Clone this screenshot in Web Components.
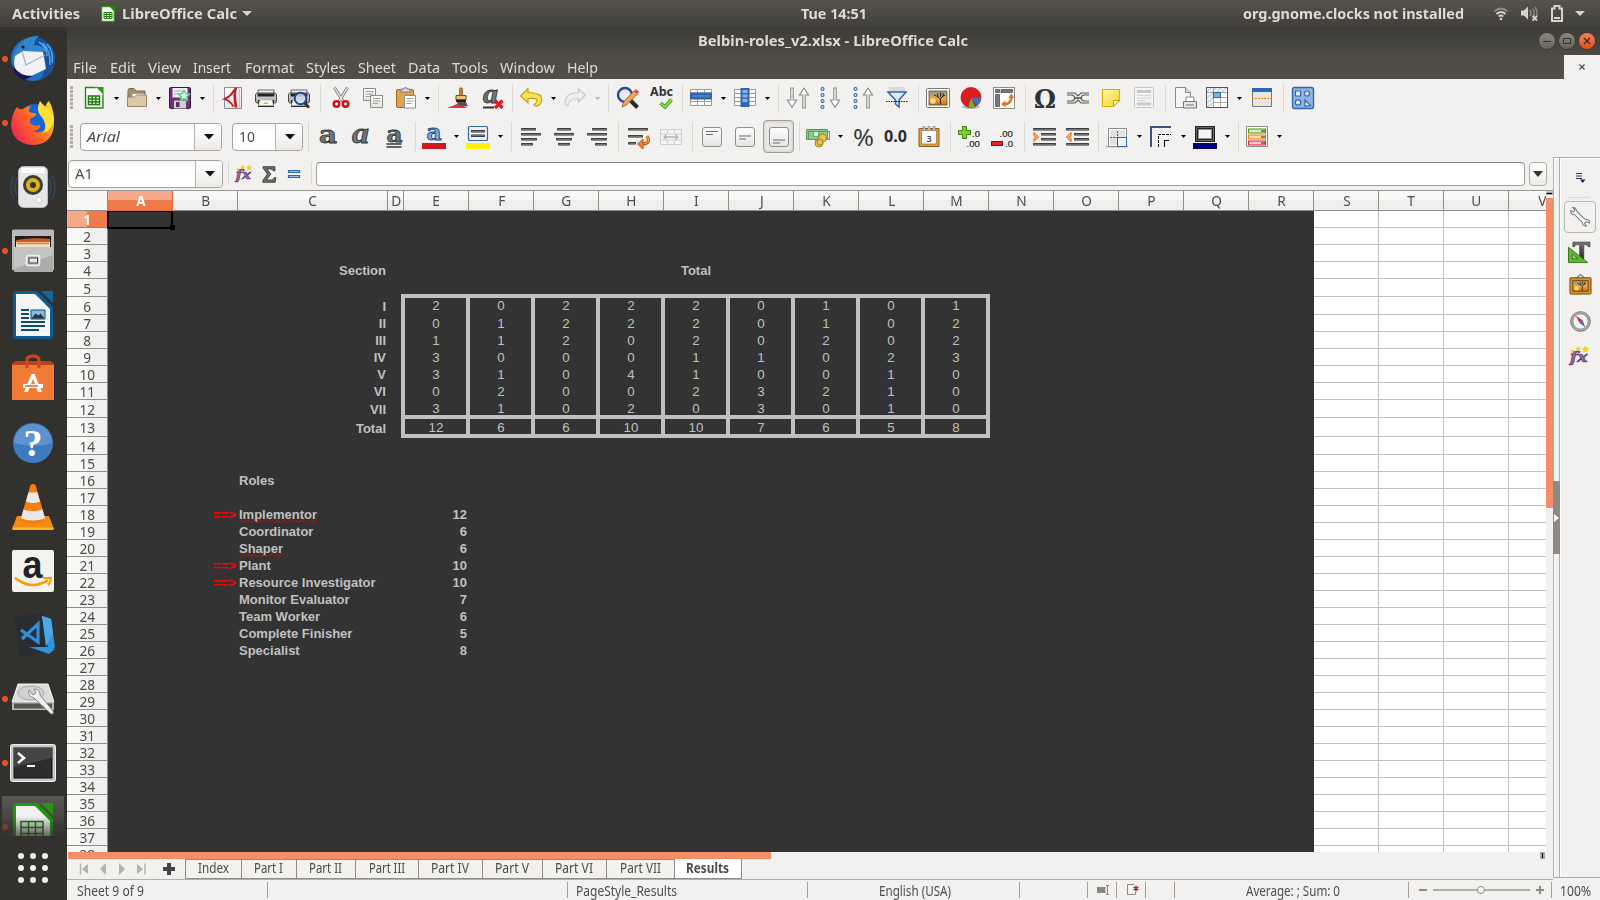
<!DOCTYPE html>
<html lang="en">
<head>
<meta charset="utf-8">
<title>Belbin-roles_v2.xlsx - LibreOffice Calc</title>
<style>
html,body{margin:0;height:100%;overflow:hidden}
body{font-family:"Noto Sans","Open Sans",sans-serif;font-size:14.4px;color:#4c4c4c;background:#f2f1f0}
</style>
</head>
<body>
<calc-desktop></calc-desktop>
<script>
/* ---------- icon artwork, 24x24 units unless noted ---------- */
const DEFS = `<defs>
<linearGradient id="pg" x1="0" y1="0" x2="0" y2="1"><stop offset="0" stop-color="#fff"/><stop offset="1" stop-color="#e4e4e2"/></linearGradient>
<linearGradient id="gr" x1="0" y1="0" x2="0" y2="1"><stop offset="0" stop-color="#e8e8e8"/><stop offset="1" stop-color="#9a9a9a"/></linearGradient>
<linearGradient id="dk" x1="0" y1="0" x2="0" y2="1"><stop offset="0" stop-color="#777"/><stop offset="1" stop-color="#222"/></linearGradient>
<linearGradient id="ye" x1="0" y1="0" x2="1" y2="1"><stop offset="0" stop-color="#fff7a0"/><stop offset="1" stop-color="#f3d62f"/></linearGradient>
<linearGradient id="sun" x1="0" y1="0" x2="0" y2="1"><stop offset="0" stop-color="#8f9a90"/><stop offset=".55" stop-color="#f0a540"/><stop offset="1" stop-color="#c06a18"/></linearGradient>
</defs>`;
const printer = `<path d="M4 4h16v4H4z" fill="#f4f4f4" stroke="#666"/><rect x="1.5" y="7" width="21" height="10" rx="2" fill="url(#gr)" stroke="#444"/><rect x="3.5" y="7.5" width="17" height="3" fill="#222"/><path d="M4 14h16v7H4z" fill="#2b2b2b"/><path d="M6 14h12l1.5 5.5h-15z" fill="#f6faf0" stroke="#bbb" stroke-width=".6"/><path d="M9 18l3-2 3 2z" fill="#8fce50"/>`;
const lines = a => a.map(([x,y,w])=>`<rect x="${x}" y="${y}" width="${w}" height="2.6" rx=".8" fill="#2a2c2c"/><rect x="${x+.8}" y="${y+.8}" width="${w-1.6}" height=".9" fill="#8b8f8d"/>`).join('');
const down = (x) => `<path d="M${x-1.2} 2h2.4v12h3.4L${x} 21.5 ${x-4.6} 14h3.4z" fill="#fff" stroke="#888a85" stroke-width="1.1"/>`;
const up = (x) => `<path d="M${x-1.2} 22h2.4V9h3.4L${x} 2.2 ${x-4.6} 9h3.4z" fill="#fff" stroke="#888a85" stroke-width="1.1"/>`;
const rings = `<g fill="#dce8f6" stroke="#3465a4" stroke-width="1.1"><circle cx="2.5" cy="3" r="1.5"/><circle cx="2.5" cy="9" r="1.5"/><circle cx="2.5" cy="15" r="1.5"/><circle cx="2.5" cy="21" r="1.5"/></g>`;
const vbox = (y) => `<rect x="2.5" y="2.5" width="19" height="19" rx="2.5" fill="url(#pg)" stroke="#8d8d8a"/><path d="M6 ${y}h12M6 ${y+3}h7" stroke="#6a6a68" stroke-width="1.2"/>`;
const glyphA = (x,y,s,extra='',f='DejaVu Serif') => `<text x="${x}" y="${y}" font-family="${f}" font-weight="700" font-size="${s}" fill="#70757a" stroke="#303433" stroke-width=".8" ${extra}>a</text>`;
const fx = `<text x="1" y="18.5" font-family="DejaVu Serif" font-weight="700" font-style="italic" font-size="17" textLength="19" lengthAdjust="spacingAndGlyphs" fill="#9c6a9b" stroke="#5c3566" stroke-width=".8">fx</text><g fill="#f3d52c" stroke="#d8b400" stroke-width=".3"><path d="M18 1l1.1 2.4 2.6.3-1.9 1.8.5 2.6L18 6.9l-2.3 1.2.5-2.6-1.9-1.8 2.6-.3z"/><path d="M10 1.5l.8 1.7 1.8.2-1.3 1.3.3 1.8L10 5.6l-1.6.9.3-1.8-1.3-1.3 1.8-.2zM3.5 5l.6 1.2 1.3.2-1 .9.3 1.3-1.2-.6-1.2.6.3-1.3-1-.9 1.3-.2z"/></g>`;
const tree = `<path d="M14.500 18.500v-5.500l-4-3M14.500 13l3.500-4M14.500 11V6.500M12 10.800l-.5-3.500M16 10.500l3-1.500M10.500 10L8 9M17 9.500V7" stroke="#2a2016" stroke-width=".95" fill="none"/>`;
const ICONS = {
new:`<path d="M3.5 1.5h11.500l6 6v14.500H3.500z" fill="url(#pg)" stroke="#2c8a12" stroke-width="1.400"/><path d="M14 1h7.500v7z" fill="#2f9a12"/><path d="M14 1.500l7 7" stroke="#fff" stroke-width="1"/><g fill="#fff" stroke="#217c0b" stroke-width="1.400"><path d="M6.500 10h11v8.500h-11zM6.500 13h11M6.500 15.700h11M10.200 10v8.500M13.800 10v8.500"/></g>`,
open:`<path d="M3 4.500q0-2 2-2h4l2 2.500h9v6H3z" fill="#a68f68" stroke="#7c684a"/><path d="M7 7.500h12v6H7z" fill="#fff" stroke="#999" stroke-width=".8"/><path d="M2.500 11h7l2-2h10v11.500h-19z" fill="#d9c7a5" stroke="#9c8660"/>`,
save:`<rect x="1.500" y="1.500" width="21" height="21" rx="1.500" fill="#6d3177" stroke="#3e1448"/><path d="M4.500 2h15v9.500h-15z" fill="#efeef2"/><path d="M6 5h9M6 8h8" stroke="#aaa"/><path d="M6 14.500h12v8H6z" fill="#cfd0cf"/><path d="M8 16h3.500v5H8z" fill="#573060"/><path d="M16 4.500l1.700 3.200 3.700.5-2.600 2.500.6 3.600-3.400-1.600-3.300 1.600.6-3.600L10.600 8l3.700-.4z" fill="#fff" stroke="#4ddc80" stroke-width="1.500"/>`,
pdf:`<path d="M3.500 1.500h17v21h-17z" fill="url(#pg)" stroke="#8c8c8c"/><path d="M15 1.500q-2.500 5 0 20" fill="none" stroke="#c8161d" stroke-width="2.600"/><path d="M13 4Q10 10.500 3.500 13q5.500 1.500 9 7.500" fill="none" stroke="#c8161d" stroke-width="1.800"/><path d="M18.500 2v20" stroke="#e3b9b9" stroke-width="1.200"/>`,
print:printer,
preview:printer+`<circle cx="13.500" cy="12.500" r="5.800" fill="#cfdcec" fill-opacity=".85" stroke="#24459a" stroke-width="2"/><path d="M17.500 17l4.500 4.500" stroke="#333" stroke-width="3"/>`,
cut:`<path d="M5.500 1.500l8.500 14M18.500 1.500L10 15.500" stroke="#777" stroke-width="3"/><path d="M5.500 1.500l8.500 14M18.500 1.500L10 15.500" stroke="#eee" stroke-width="1.400"/><g fill="#fff" stroke="#cc1420" stroke-width="2.600"><circle cx="7.500" cy="18" r="2.700"/><circle cx="16.500" cy="18" r="2.700"/></g>`,
copy:`<path d="M2.500 2.500h12v12h-12z" fill="url(#pg)" stroke="#8a8c88"/><path d="M4.500 5.500h8M4.500 8h8M4.500 10.500h6" stroke="#9a9c98"/><path d="M9.500 9.500h12v12h-12z" fill="url(#pg)" stroke="#8a8c88"/><path d="M12 12.500h7.500M12 15h7.500M12 17.500h5" stroke="#9a9c98"/>`,
paste:`<rect x="2.500" y="3.500" width="17" height="18" rx="1.500" fill="#dfa254" stroke="#a06a1c"/><path d="M7 6V3h3q0-1.500 1.500-1.500T13 3h3v3z" fill="#ddd" stroke="#777"/><path d="M10.500 9.500h11v12.500h-11z" fill="#fff" stroke="#8a8c88"/><path d="M12.500 12.500h7M12.500 15h7M12.500 17.500h5" stroke="#9a9c98"/>`,
brush:`<path d="M1 22q7-2.500 12-5l8 5z" fill="#e2343f"/><path d="M11 16l8.500-1 2.500 5.500-9.500-1z" fill="#555"/><path d="M10 9.500h10v4.500H10z" fill="#f0c36d" stroke="#6a4a1a"/><path d="M13.700 9.500V2.500q1.200-1.500 2.600 0v7z" fill="#c98a3b" stroke="#8a5a1c"/><path d="M10 13.500h10v2.500H10z" fill="#222"/>`,
clear:glyphA(2,17,27,'font-style="italic" textLength="15" lengthAdjust="spacingAndGlyphs"','Liberation Serif')+`<path d="M2 21.500h11" stroke="#333" stroke-width="2"/><path d="M14 14.500l7.500 7.500M21.500 14.500L14 22" stroke="#e01b24" stroke-width="3.200"/>`,
undo:`<path d="M1.500 10L9 2.500v4q9 0 13 3.500 2.500 7-3.500 10-3 .5-3.500-1.500 4-2.500 2.500-5.500Q14.500 12 9 12.500V17z" fill="#f6e15a" stroke="#c4a000" stroke-width="1.100"/>`,
redo:`<path d="M22.500 9L15.500 3v3.500Q4.500 7 2.500 13q-1 3 .5 6l2 .5q.5-6.500 10.500-7v3.500z" fill="#ececeb" stroke="#c8c8c6" stroke-width="1.100"/>`,
find:`<path d="M14 14l7.500 7.500" stroke="#2a2a2a" stroke-width="4"/><circle cx="9" cy="9" r="7" fill="#e4ecf6" stroke="#26479b" stroke-width="2.400"/><path d="M6 21l1.500-5L18 5l3.500 3L10.500 19z" fill="#f3a45c" stroke="#a14c0c" stroke-width=".8"/><path d="M18 5l3.500 3 1.500-2-3-3z" fill="#ee4050"/>`,
abc:`<text x="0" y="10" font-family="Noto Sans" font-weight="700" font-size="13" textLength="23" lengthAdjust="spacingAndGlyphs" fill="#333">Abc</text><path d="M10.500 17l4.500 4 6.500-7.500" fill="none" stroke="#3c9d0c" stroke-width="3.600"/><path d="M10.500 17l4.500 4 6.500-7.500" fill="none" stroke="#9be35e" stroke-width="1.600"/>`,
row:`<path d="M1.500 3.500h21v16h-21zM1.500 7h21M1.500 15.500h21M8.500 3.500v16M15.500 3.500v16" fill="#fff" stroke="#999b97"/><rect x="1" y="6.500" width="22" height="7" fill="#2f66b0"/><path d="M3 10h18" stroke="#6b98d0"/>`,
col:`<path d="M1.500 3.500h21v16h-21zM1.500 7.500h21M1.500 11.500h21M1.500 15.500h21" fill="#fff" stroke="#999b97"/><rect x="7.500" y="2" width="9" height="19" fill="#2f66b0"/><path d="M9.500 4h5v3h-5zM9.500 8.500h5v3h-5zM9.500 13h5v3h-5z" fill="#8db3e0"/>`,
sort:down(6)+up(18),
asc:rings+down(15),
desc:rings+up(15),
filter:`<path d="M4 1h16v5H4z" fill="#ccc" opacity=".6"/><path d="M3 6h18l-7 8v7l-3.500-3v-4z" fill="#dfeaf8" stroke="#3465a4" stroke-width="1.500"/><path d="M1 15.500h22" stroke="#222" stroke-dasharray="1.500 1"/>`,
image:`<rect x=".5" y="2.500" width="23" height="19" rx="1" fill="#fbfbfa" stroke="#777"/><rect x="3" y="5" width="18" height="14" fill="url(#sun)" stroke="#444" stroke-width=".7"/><circle cx="7" cy="15" r="2.800" fill="#ffe37a"/>${tree}`,
chart:`<ellipse cx="12" cy="21" rx="9" ry="2" fill="#bbb"/><circle cx="12" cy="11.500" r="10" fill="#e01b20" stroke="#a40000" stroke-width=".7"/><path d="M12 12l10-1q0 6-4 9z" fill="#3f6fb5"/><path d="M12 12l4 9.300q-4 .8-6.500-.3z" fill="#6cb52d"/>`,
pivot:`<path d="M1.500 1.500h21v21h-21z" fill="#fff" stroke="#8a8c88"/><path d="M3.500 3.500h4v3h-4zM9 3.500h11.500v3H9zM3.500 8.500h4v12h-4z" fill="#777" stroke="#444" stroke-width=".7"/><path d="M11.500 18q7 1 8-7" fill="none" stroke="#e8731a" stroke-width="2.500"/><path d="M9 18l4.500-3.500v7zM19.300 7.500l3 4.500h-6z" fill="#e8731a"/>`,
omega:`<text x="1" y="21.500" font-family="DejaVu Serif" font-weight="700" font-size="26" textLength="22" lengthAdjust="spacingAndGlyphs" fill="#2e3436">Ω</text>`,
link:`<g fill="none" stroke="#555753" stroke-width="1.100"><path d="M1 9h5q2 0 3 3-1 3-3 3H1M23 9h-5q-2 0-3 3 1 3 3 3h5"/><path d="M1 7h8l3 3 3-3h8M1 17h8l3-3 3 3h8"/><path d="M8 12h8" stroke-width="1.600"/></g>`,
note:`<path d="M3.500 3.500h17v11l-6 6h-11z" fill="url(#ye)" stroke="#d3b400" stroke-width="1.200"/><path d="M14.500 20.500v-6h6z" fill="#fff6b0" stroke="#c4a000"/>`,
hf:`<rect x="2.500" y="1.500" width="19" height="20" rx="1" fill="#f3f3f2" stroke="#c6c6c4"/><path d="M5 4h14v3H5zM5 16.500h14v3H5z" fill="#c9c9c7"/><path d="M5 9.500h14M5 12h14M5 14.500h8" stroke="#d6d6d4"/>`,
parea:`<path d="M2.500 1.500h10l5 5v15h-15z" fill="#f6f6f5" stroke="#8a8a88"/><path d="M12.500 1.500v5h5" fill="#ddd" stroke="#8a8a88"/><path d="M13 11h8v5h-8z" fill="#fff" stroke="#888"/><path d="M10.500 15.500h13v6.500h-13z" fill="#e6e6e4" stroke="#777"/><path d="M13 19h8" stroke="#999" stroke-width="1.500"/>`,
freeze:`<path d="M1.500 1.500h21v20h-21z" fill="#fff" stroke="#555"/><path d="M2 2h20v4.500H2zM2 6.500h6V21H2z" fill="#eef2f6"/><path d="M2 6l4-4M7 6l4-4M12 6l4-4M17 6l4-4M2 12l6-5M2 17l6-5M2 21l6-4" stroke="#9bb5cf" stroke-width=".8"/><path d="M8.500 2v19M2 6.500h20M15.500 6v15M8 11.500h14M8 16.500h14" stroke="#aaa"/><rect x="8.500" y="6.500" width="7" height="5" fill="#86aedb" stroke="#3465a4"/><path d="M1.500 1.500h21v20h-21z" fill="none" stroke="#555"/>`,
split:`<path d="M2.500 2.500h19v18h-19z" fill="#e6e7e4" stroke="#777"/><rect x="2" y="2" width="20" height="4" fill="#2f66b0"/><path d="M2 12.500h20" stroke="#f57900" stroke-dasharray="2 1" stroke-width="1.200"/>`,
draw:`<rect x="1.500" y="1.500" width="21" height="21" rx="2" fill="#8fb4df" stroke="#2f66b0" stroke-width="1.400"/><g fill="#e9f1fa" stroke="#2f66b0" stroke-width="1.200"><path d="M4.500 5h5v5h-5zM14 20v-6l5.500 5.500z"/><circle cx="16" cy="7.500" r="2.500"/><circle cx="7" cy="16.500" r="2.700"/></g>`,
ba:glyphA(3,18,24,'textLength="18" lengthAdjust="spacingAndGlyphs"'),
ia:glyphA(3,18,29,'font-style="italic" textLength="17" lengthAdjust="spacingAndGlyphs"','Liberation Serif'),
ua:glyphA(4.500,16.500,22,'textLength="16" lengthAdjust="spacingAndGlyphs"')+`<path d="M4.500 19h15M4.500 22h15" stroke="#333" stroke-width="1.400"/>`,
fcol:`<text x="4.500" y="15" font-family="DejaVu Serif" font-weight="700" font-size="22" textLength="15" lengthAdjust="spacingAndGlyphs" fill="#7fa8dc" stroke="#204a87" stroke-width=".9">a</text><rect y="18" width="24" height="6" fill="#cf1820"/>`,
hcol:`<rect x="2.500" y="1.500" width="19" height="14" rx="1" fill="#eef3fa" stroke="#3465a4" stroke-width="1.200"/>${lines([[5,5,14],[5,9.500,14]])}<rect y="18" width="24" height="6" fill="#fff200"/>`,
al:lines([[2,3,15],[2,8,20],[2,13,16],[2,18,12]]),
ac:lines([[5,3,14],[2,8,20],[4,13,16],[6,18,12]]),
ar:lines([[7,3,15],[2,8,20],[6,13,16],[10,18,12]]),
wrap:lines([[2,3,20],[2,10,15],[2,17,8]])+`<path d="M21 11q5 8-6 8" fill="none" stroke="#c65306" stroke-width="3"/><path d="M21 11q5 8-6 8" fill="none" stroke="#f9a35a" stroke-width="1.200"/><path d="M11.500 19l5.500-5v10z" fill="#f28030" stroke="#c65306"/>`,
merge:`<path d="M1.500 4.500h21v15h-21zM1.500 9h21M1.500 15h21M8.500 4.500V9M15.500 4.500V9M8.500 15v4.500M15.500 15v4.500" fill="#f3f3f2" stroke="#cfcfcd"/><path d="M5 12h14M7.500 9.500L5 12l2.500 2.500M16.500 9.500L19 12l-2.500 2.500" fill="none" stroke="#b4b4b2" stroke-width="1.300"/>`,
vt:vbox(6.500), vm:vbox(11), vb:vbox(15),
cur:`<path d="M.5 4.500h21v10H.5z" fill="#8cc98a" stroke="#5a9a58"/><path d="M2.500 6.500h21v8h-21z" fill="none" stroke="#5a9a58"/><circle cx="10" cy="9" r="3" fill="#e2f2e0" stroke="#5a9a58"/><g fill="#e6c652" stroke="#a5861a"><circle cx="13" cy="18" r="4"/><circle cx="16.500" cy="13" r="4"/><circle cx="14" cy="17" r="3"/></g>`,
pct:`<text x="1" y="20.500" font-family="Noto Sans" font-size="23" textLength="21" lengthAdjust="spacingAndGlyphs" fill="#3a3a3a">%</text>`,
dec:`<text x="0" y="17" font-family="Noto Sans" font-weight="700" font-size="15.500" textLength="23" lengthAdjust="spacingAndGlyphs" fill="#2c2c2c">0.0</text>`,
date:`<path d="M2 3.500h20v18H2z" fill="#dea24e" stroke="#8d5d17"/><path d="M4.500 5.500h15v13.500h-15z" fill="#fafafa" stroke="#8d5d17" stroke-width=".6"/><path d="M7 1v5M12 1v5M17 1v5" stroke="#777" stroke-width="2.600"/><path d="M7 1.500v4M12 1.500v4M17 1.500v4" stroke="#fff" stroke-width="1"/><text x="9.500" y="16.500" font-family="Noto Sans" font-weight="600" font-size="9" fill="#444">3</text>`,
dadd:`<path d="M5.500 1.500h4v4h4v4h-4v4h-4v-4h-4v-4h4z" fill="#7bd41c" stroke="#3c8208"/><text x="15" y="11.500" font-family="Liberation Sans" font-size="9.500" fill="#222" stroke="#222" stroke-width=".2">.0</text><text x="9.500" y="22" font-family="Liberation Sans" font-size="9.500" fill="#222" stroke="#222" stroke-width=".2">.00</text>`,
ddel:`<text x="9.500" y="11.500" font-family="Liberation Sans" font-size="9.500" fill="#222" stroke="#222" stroke-width=".2">.00</text><text x="15" y="22" font-family="Liberation Sans" font-size="9.500" fill="#222" stroke="#222" stroke-width=".2">.0</text><rect x="1.500" y="16.500" width="11" height="4" fill="#e5212b" stroke="#8f0b10"/>`,
ind:lines([[1,3,23],[9,8,15],[9,13,15],[1,18,23]])+`<path d="M2 7.500l4.500 4.500L2 16.500v-3L3.500 12 2 10.500z" fill="#fbb36b" stroke="#e0640c"/>`,
outd:lines([[1,3,23],[9,8,15],[9,13,15],[1,18,23]])+`<path d="M6 7.500L1.500 12 6 16.500v-3L4.500 12 6 10.500z" fill="#fbb36b" stroke="#e0640c"/>`,
bord:`<path d="M1 21.500h22" stroke="#bbb" stroke-width="2"/><path d="M3.500 3.500h18v18h-18z" fill="#fff" stroke="#8a8c88"/><path d="M5 5h15v15H5z" fill="#e2e3e0"/><path d="M12.500 6v7M5 12.500h8" stroke="#555" stroke-dasharray="2 1"/><rect x="12.500" y="12.500" width="9" height="9" fill="#edf3fa" stroke="#3465a4"/>`,
bsty:`<path d="M2 22V2h20" fill="none" stroke="#3a5378" stroke-width="2"/><path d="M9.500 22V9.500H22" fill="none" stroke="#111" stroke-width="1" stroke-dasharray="3 1"/><path d="M15.500 22v-6.500H20" fill="none" stroke="#111" stroke-width="1.100"/>`,
bcol:`<rect x="2" y="1" width="20" height="16" fill="#222"/><path d="M3.500 2.500h17v13h-17z" fill="none" stroke="#666"/><path d="M5.500 4.500h13v9h-13z" fill="#f4f4f4" stroke="#999" stroke-width=".8"/><rect y="18" width="24" height="6" fill="#00007f"/>`,
cond:`<path d="M1.500 1.500h21v20h-21z" fill="#fff" stroke="#8a8c88"/><g stroke-width="1.200"><path d="M3.500 4h17v4h-17z" fill="#d5f0b8" stroke="#4e9a06"/><path d="M3.500 10h17v4h-17z" fill="#fddcb0" stroke="#e88010"/><path d="M3.500 16h17v4h-17z" fill="#fbc2c6" stroke="#e02030"/></g><path d="M16 6h4M16 12h4M16 18h4" stroke="#222"/>`,
fx, sum:`<path d="M5.500 4h13v4.500h-2q-.3-2-2.500-2H9.700l4.300 5.700-5 6.300h6q2 0 2.500-2.500h2l-.8 5H5.300v-2l5-7-4.800-6.500z" fill="#6a6f6c" stroke="#303433" stroke-width=".9"/>`,
eq:`<path d="M6.500 8.500h11v2h-11zM6.500 13.500h11v2h-11z" fill="#9bbde5" stroke="#2f66b0" stroke-width="1.200"/>`,
smenu:`<path d="M8 8.500h6M8 11h6M8 13.500h6" stroke="#2b3a52" stroke-width="1.200"/><path d="M12 14.500h5.500L14.700 18z" fill="#1a2a44"/>`,
wrench:`<path d="M8 4q-1-2.500-4-2.500l2.500 3L5 6.500 2 5q-.5 4 4 4.500L14.500 18q.5 4 4.500 4l-2-3 2-2 3.500 1.500q0-4.500-5-4L9 6.500Q8.700 5 8 4z" fill="#f6f6f5" stroke="#777" stroke-width="1.100"/>`,
tt:`<path d="M5 1h18v5h-2q-.5-2-2.500-2h-2v15h-4.500V4H9Q7 4 7 6H5z" fill="url(#dk)" stroke="#333" stroke-width=".5"/><path d="M.5 6.500v16h20z" fill="#63b43a" stroke="#2f7d10"/><path d="M4.500 13.500v5h6z" fill="#a4dd80" stroke="#2f7d10"/>`,
gal:`<path d="M8 5l4-3.500L16 5" fill="none" stroke="#777" stroke-width="1.200"/><rect x="1" y="5" width="22" height="17" rx="1" fill="#d9952c" stroke="#6d430a"/><rect x="4" y="8" width="16" height="11" fill="url(#sun)" stroke="#5b3708" stroke-width=".8"/><circle cx="8" cy="16" r="2.300" fill="#ffe37a"/><g transform="translate(2 3.500) scale(.82)">${tree}</g>`,
nav:`<circle cx="12" cy="12" r="10.300" fill="#aaadab" stroke="#777"/><circle cx="12" cy="12" r="8" fill="#f5f5f4" stroke="#888"/><path d="M7 6l7 4.500-3 3z" fill="#e3282f"/><path d="M17 18l-3-7.500-3 3z" fill="#3f6fb5"/>`
};
const svg = (n,s=24) => `<svg width="${s}" height="${s}" viewBox="0 0 24 24">${DEFS}${ICONS[n]}</svg>`;

/* ---------- launcher artwork, 48x48 units ---------- */
const DOCK = {
thunderbird:`<circle cx="24" cy="24" r="22" fill="#1f6fc4"/><path d="M12 8Q20-1 33 4q12 6 13 18 0 16-16 24 8-10 6-24L24 12z" fill="#1a4f9c"/><path d="M6 17Q14 0 30 1q-4 3-5 9 9 0 12 6L4 26q-1-5 2-9z" fill="#2f86cc"/><path d="M34 8q8 8 7 22M38 9q7 8 5 19M30 7q8 5 8 14" stroke="#4ea6e8" stroke-width="1.500" fill="none"/><path d="M6 21l8-5 20 1 3 17-19 9Q5 38 5 27z" fill="#f1f2f5"/><path d="M13 16l4 14 19-10" stroke="#a9adb6" fill="none" stroke-width="1.200"/><path d="M4 31q6 10 20 10l-9 4Q5 42 4 31z" fill="#1c1250"/><circle cx="14" cy="12" r="1.600" fill="#111"/>`,
firefox:`<defs><linearGradient id="f1" x1="0" y1=".8" x2="1" y2=".2"><stop offset="0" stop-color="#f0205a"/><stop offset=".5" stop-color="#ff6a20"/><stop offset="1" stop-color="#ffd92a"/></linearGradient></defs><circle cx="26" cy="22" r="17" fill="#1266d8"/><path d="M8 8q2 3 6 2 4-3 8-3-3 4-2 6 4 1 8 2-4 4-6 4-2 3 0 6 5 3 9 1 0 6-8 6 12 4 16-6 3-8-3-15 0-6 4-9 6 10 5 24-2 20-22 20Q3 44 2 26 3 14 8 8z" fill="url(#f1)"/><path d="M31 2q-4 8 0 14 8 8 4 18 8-3 10-14Q44 12 37 8q-4-3-6-6z" fill="#ffe13a"/>`,
speaker:`<path d="M5 12q-6 12 0 24M43 12q6 12 0 24M8 15q-4 9 0 18M40 15q4 9 0 18" stroke="#2f4256" stroke-width="2" fill="none"/><rect x="9.500" y="3.500" width="29" height="41" rx="5" fill="#e6e6e6" stroke="#bbb"/><rect x="12" y="5" width="24" height="5" rx="2" fill="#fff"/><circle cx="24" cy="22" r="10" fill="#3d3d3d"/><circle cx="24" cy="22" r="7" fill="#d9b514"/><circle cx="24" cy="22" r="3" fill="#333"/><circle cx="30" cy="37" r="3" fill="#fafafa" stroke="#ccc"/>`,
files:`<path d="M3 4q0-1.500 1.500-1.500h39Q45 2.500 45 4v39H3z" fill="#b9b9b9"/><path d="M6 9h36v14H6z" fill="#231c1a"/><path d="M7 13q17-3 34-1v9H7z" fill="#cf5a22"/><path d="M7 15h34v5H7z" fill="#f5e0c4"/><path d="M8 16.500h32" stroke="#e07a30" stroke-width="1.500"/><path d="M5 20h39v25H5z" fill="#ababab"/><path d="M5 20h39v8L5 42z" fill="#c3c3c3"/><rect x="17.500" y="28.500" width="13" height="10" rx="1.500" fill="#bdbdbd" stroke="#efefef" stroke-width="1.500"/><rect x="20" y="31" width="8.500" height="5" fill="#e2e2e2" stroke="#444"/>`,
writer:`<path d="M4 4q0-4 4-4h20l16 16v28q0 4-4 4H8q-4 0-4-4z" fill="#0e5c92"/><path d="M7 3h19l15 15v27H7z" fill="#f4f5f6"/><path d="M32 0h12v12z" fill="#0d69a6"/><path d="M12 19h8M12 23h8M12 27h8M12 31h24M12 35h24M12 39h18" stroke="#0b4c7a" stroke-width="2"/><path d="M22 19h14v9H22z" fill="#7fc1ea" stroke="#124c74"/><path d="M22.500 27.500l4-5 3 2 2-2 4 5z" fill="#333"/>`,
software:`<path d="M3 9l4-3h34l4 3v36H3z" fill="#f07a36"/><path d="M3 9l4-3h34l4 3v1H3z" fill="#b8431a"/><path d="M18 13V5q0-4 6-4t6 4v8" fill="none" stroke="#d2461a" stroke-width="3"/><path d="M15 37l7.500-18h3L33 37h-4l-5-13-5 13z" fill="#fff"/><path d="M14 29h20v4H14z" fill="#fff"/><path d="M16 31h13" stroke="#e8622a" stroke-width="1.500"/>`,
help:`<circle cx="24" cy="24" r="20" fill="#3c7bbd"/><path d="M5 24a19 19 0 0 1 38 0q-19 6-38 0z" fill="#5d94d0"/><text x="14.500" y="37" font-family="Liberation Serif" font-weight="700" font-size="38" fill="#fff">?</text>`,
vlc:`<path d="M8 33h32l5 13H3z" fill="#f58a12"/><path d="M3.500 44.500h41V47h-41z" fill="#ffb52a"/><path d="M21.500 2q2.500-2 5 0l10.500 36q-13 5-26 0z" fill="#f47f0c"/><path d="M19.500 9.500h9l2.500 9q-7 3-14 0z" fill="#e8e8e8"/><path d="M14.500 26.500q9.500 3 19 0l2.500 9q-12 4-24 0z" fill="#e8e8e8"/>`,
amazon:`<rect x="3" y="3" width="42" height="42" rx="2" fill="#f3f3f1"/><text x="13.500" y="31" font-family="Liberation Sans" font-weight="700" font-size="38" textLength="20" lengthAdjust="spacingAndGlyphs" fill="#222">a</text><path d="M6 31q17 13 33 2" fill="none" stroke="#f90" stroke-width="2.600"/><path d="M34 31h8q0 4-3 7" fill="none" stroke="#f90" stroke-width="1.800"/>`,
vscode:`<path d="M5 6l30-4 6 38L11 46z" fill="#2a2c33"/><path d="M20 36l20 0 6 2-6 5z" fill="#2f93dd"/><path d="M33 5l9 3 4 28-6 5z" fill="#2f93dd"/><path d="M33 5l9 3 2 14-7 14z" fill="#4aa8ea"/><path d="M12 19l17 12V13L13 28" fill="none" stroke="#2f8fd8" stroke-width="3.200"/>`,
disks:`<path d="M9 9h30l6 18H3z" fill="#dcdcdc" stroke="#f5f5f5"/><path d="M3 27h42v8H3z" fill="#b9b9b9"/><path d="M5 31h38" stroke="#555" stroke-width="5"/><ellipse cx="22" cy="18" rx="13" ry="7" fill="#d2d3d1" stroke="#aaa"/><path d="M20 15q-2 6 5 8l16 15q4 3 3-2L31 20q0-6-6-6l2 4-3 2z" fill="#efefef" stroke="#888"/>`,
terminal:`<rect x="1.500" y="5.500" width="45" height="37" rx="2" fill="#c8c6c8" stroke="#eee"/><rect x="5" y="9" width="38" height="30" fill="#2d2d2d" stroke="#111"/><path d="M5 9h38v10L5 28z" fill="#454545"/><path d="M9 14l6 5-6 5" fill="none" stroke="#fff" stroke-width="2.500"/><path d="M18 27h8" stroke="#fff" stroke-width="2"/>`,
calc:`<path d="M4 4q0-4 4-4h20l16 16v32H4z" fill="#1c9a0c"/><path d="M7 3h19l15 15v30H7z" fill="#f1f2f1"/><path d="M32 0h12v12z" fill="#1c9a0c"/><path d="M12 18.500h22v18H12zM12 24.500h22M12 30.500h22M19.500 18.500v18M26.500 18.500v18" fill="#d9ead6" stroke="#17720b" stroke-width="1.500"/>`
};

/* ---------- helpers ---------- */
function define(name, css, render){
  customElements.define(name, class extends HTMLElement{
    connectedCallback(){
      if(this.shadowRoot) return;
      const r = this.attachShadow({mode:'open'});
      r.innerHTML = `<style>:host{display:block;box-sizing:border-box}*{box-sizing:border-box}svg{display:block;overflow:visible}${css}</style>` + render(this);
    }
  });
}
/* Turns [x, width, markup] entries into flow items separated by margins. */
function strip(items, start){
  let end = start;
  return items.map(([x,w,html])=>{ const m = x-end; end = x+w; return `<div class="i" style="margin-left:${m}px;width:${w}px">${html}</div>`; }).join('');
}
const fit = (w,t,st='') => `<fit-text w="${w}" style="${st}">${t}</fit-text>`;

/* Text condensed or widened to a given advance. */
customElements.define('fit-text', class extends HTMLElement{
  connectedCallback(){
    if(this.shadowRoot) return;
    const w = +this.getAttribute('w');
    this.attachShadow({mode:'open'}).innerHTML = `<style>:host{display:block;width:${w}px;white-space:pre}span{display:inline-block;transform-origin:0 50%}</style><span><slot></slot></span>`;
    const s = this.shadowRoot.querySelector('span'), n = s.getBoundingClientRect().width;
    if(n) s.style.transform = `scaleX(${w/n})`;
  }
});

define('top-bar', `:host{height:27px;background:linear-gradient(#56534c,#403f3a);color:#dfdbd2;font-weight:700;line-height:27px;display:flex;overflow:hidden}
.i{flex:none;height:27px;display:flex;align-items:center}`, () => strip([
 [12,68,fit(68,'Activities')],
 [101,14,`<svg width="14" height="16" viewBox="0 0 14 16"><path d="M.7.700h8.500l4 4v10.600H.700z" fill="#fff" stroke="#2c9a12" stroke-width="1.200"/><path d="M8.500 0H14v5.500z" fill="#1f8a0a"/><path d="M3 6.500h8v6H3zM3 8.500h8M3 10.500h8M5.700 6.500v6M8.300 6.500v6" fill="none" stroke="#217c0b"/></svg>`],
 [122,115,fit(115,'LibreOffice Calc')],
 [242,10,`<svg width="10" height="5"><path d="M0 0h10L5 5z" fill="#d8d4cb"/></svg>`],
 [801,66,fit(66,'Tue 14:51')],
 [1243,221,fit(221,'org.gnome.clocks not installed')],
 [1494,14,`<svg width="14" height="14" viewBox="0 0 14 14" fill="none" stroke="#d8d4cb" stroke-width="1.700"><path d="M.5 4.500q6.500-6 13 0" opacity=".5"/><path d="M2.500 7q4.500-4 9 0M4.700 9.500q2.300-2 4.600 0"/><circle cx="7" cy="12" r="1.300" fill="#d8d4cb" stroke="none"/></svg>`],
 [1521,17,`<svg width="17" height="15" viewBox="0 0 17 15"><path d="M0 4.500h3L7 .500v13L3 9.500H0z" fill="#d8d4cb"/><path d="M9 4q2 3 0 6M11.500 2.500q3.500 4 .500 8M14 1q3 4 1.500 9" stroke="#8c8982" stroke-width="1.400" fill="none"/><path d="M11.500 10l4.500 4.500M16 10l-4.500 4.500" stroke="#d8d4cb" stroke-width="1.800"/></svg>`],
 [1551,12,`<svg width="12" height="17" viewBox="0 0 12 17"><path d="M1 3.500h2.500V1h5v2.500H11V16H1z" fill="none" stroke="#d8d4cb" stroke-width="2"/><path d="M3 13h6" stroke="#d8d4cb" stroke-width="2"/></svg>`],
 [1575,10,`<svg width="10" height="5"><path d="M0 0h10L5 5z" fill="#d8d4cb"/></svg>`]
],0));

define('dock-item', `:host{height:64px;width:67px;flex:none;display:flex;align-items:center}
b{width:6px;height:6px;border-radius:3px;margin-left:2px;flex:none}b.on{background:#e95420}svg{margin-left:1px}
:host([active]){height:44px;align-items:flex-start;overflow:hidden;background:linear-gradient(#5a5853,#3a3835) 2px 4px/62px 40px no-repeat;-webkit-mask:linear-gradient(#000 55%,#0004)}
:host([active]) b{margin-top:32px;opacity:.6}:host([active]) svg{margin-top:11px}`,
 e => `<b class="${e.hasAttribute('run')?'on':''}"></b><svg width="48" height="48" viewBox="0 0 48 48">${DEFS}${DOCK[e.getAttribute('icon')]}</svg>`);

define('app-dock', `:host{width:67px;height:873px;background:#33312d;display:flex;flex-direction:column;overflow:hidden}
.grid{display:grid;grid-template-columns:repeat(3,6px);gap:6px;margin:17px 0 0 18px}.grid i{width:6px;height:6px;border-radius:3px;background:#f3f2f0}`,
 () => ['thunderbird*','firefox*','speaker','files*','writer','software','help','vlc','amazon','vscode','disks*','terminal*'].map(n=>`<dock-item icon="${n.replace('*','')}" ${n.endsWith('*')?'run':''}></dock-item>`).join('')
 + `<dock-item icon="calc" run active style="margin-top:-3px"></dock-item><div class="grid">${'<i></i>'.repeat(9)}</div>`);

define('title-bar', `:host{height:28px;background:linear-gradient(#3c3b37,#4c4a43);color:#dfdbd2;font-weight:700;line-height:25px;display:flex}
.i{flex:none;height:28px;display:flex;align-items:center}.i fit-text{margin-top:-2px}i{display:grid;place-items:center;width:16px;height:16px;border-radius:8px;background:linear-gradient(#8a877f,#66635b);box-shadow:0 0 0 .5px #2c2b28}i.c{background:linear-gradient(#f58058,#e2501c)}`,
 () => strip([[698,270,fit(270,'Belbin-roles_v2.xlsx - LibreOffice Calc')],
 [1539,16,`<i><svg width="8" height="8"><path d="M0 4.500h8" stroke="#33322e"/></svg></i>`],
 [1559,16,`<i><svg width="8" height="8"><path d="M.5 1.500h7v5h-7z" fill="none" stroke="#33322e"/></svg></i>`],
 [1579,16,`<i class="c"><svg width="8" height="8"><path d="M1 1l6 6M7 1L1 7" stroke="#33322e" stroke-width="1.300"/></svg></i>`]],67));

define('menu-bar', `:host{height:24px;background:#504d46;color:#dfdbd2;line-height:24px;display:flex}.i{flex:none}fit-text{padding-top:1px}
.x{background:#f2f1f0;height:24px;display:grid;place-items:center}`,
 () => strip([['File',73,24],['Edit',109.5,26],['View',148,33],['Insert',193,38],['Format',244.500,49],['Styles',306,39.500],['Sheet',358,38],['Data',408,32],['Tools',452,36],['Window',500,55],['Help',567,31]].map(([t,x,w])=>[x,w,fit(w,t)]).concat([[1564,36,`<div class="x"><svg width="6" height="6"><path d="M.5.500l5 5M5.500.500l-5 5" stroke="#4c4c4c" stroke-width="1.200"/></svg></div>`]]),67));

define('combo-box', `:host{height:28px;border:1px solid #a5a29d;border-radius:4px;background:linear-gradient(#f4f3f2,#fff 30%);display:flex;line-height:26px;overflow:hidden}
.t{flex:1;padding-left:6px}.b{width:27px;border-left:1px solid #b5b2ad;background:linear-gradient(#fff,#ecebe9);display:grid;place-items:center;padding-left:1px}`,
 () => `<div class="t"><slot></slot></div><div class="b"><svg width="10" height="6"><path d="M0 0h10L5 5.500z" fill="#111"/></svg></div>`);

const ARROW = `<svg width="5" height="3"><path d="M0 0h5L2.500 3z" fill="#000"/></svg>`, ARROWG = ARROW.replace('#000','#b4b4b2');
const SEP = `<s></s>`;
const GRIP = `<svg width="3" height="24"><path d="M1.500 0v24" stroke="#b3b0ab" stroke-width="3" stroke-dasharray="3 1"/></svg>`;
const BAR = `:host{display:flex;align-items:center}.i{flex:none;display:flex;align-items:center;justify-content:center}s{width:1px;height:29px;background:#dcdad7}
.p{width:31px;height:33px;border:1px solid #a3a09b;border-radius:4px;background:#e9e8e6;display:grid;place-items:center;box-shadow:inset 0 0 3px #bbb}`;
const tool = (n,c) => [c-12,24,svg(n)], arr = c => [c-2.5,5,ARROW], sep = c => [Math.floor(c),1,SEP];
define('standard-bar', BAR+`:host{height:38px}`, () => strip([
 [70,3,GRIP],tool('new',94),arr(116.5),tool('open',137),arr(158.5),tool('save',180),arr(202.5),sep(213),tool('pdf',233),tool('print',266),tool('preview',299),sep(320),
 tool('cut',341),tool('copy',373),tool('paste',406),arr(427.5),sep(438),tool('brush',458),tool('clear',493),sep(512),tool('undo',531),arr(553.5),tool('redo',575),[595,5,ARROWG],sep(608),
 tool('find',628),tool('abc',662),sep(682),tool('row',701),arr(723.5),tool('col',745),arr(767.5),sep(778),tool('sort',798),tool('asc',832),tool('desc',865),tool('filter',897),sep(918),
 tool('image',938),tool('chart',971),tool('pivot',1004),sep(1025),tool('omega',1045),tool('link',1078),tool('note',1111),tool('hf',1144),sep(1165),tool('parea',1185),tool('freeze',1217),arr(1239.5),tool('split',1262),sep(1283),tool('draw',1303)
],67));
define('format-bar', BAR+`:host{height:39px}combo-box{flex:1}`, () => strip([
 [70,3,GRIP],[80,142,`<combo-box>${fit(33,'<em>Arial</em>')}</combo-box>`],[232,71,`<combo-box>${fit(16,'10')}</combo-box>`],sep(308),
 tool('ba',328),tool('ia',361),tool('ua',394),sep(415),tool('fcol',434),arr(456.5),tool('hcol',478),arr(500.5),sep(511),tool('al',531),tool('ac',564),tool('ar',597),sep(618),
 tool('wrap',638),tool('merge',671),sep(692),tool('vt',712),tool('vm',745),[763,31,`<div class="p">${svg('vb')}</div>`],sep(799),
 tool('cur',818),arr(840.5),tool('pct',864),tool('dec',896),tool('date',929),sep(950),tool('dadd',969),tool('ddel',1002),sep(1024),tool('ind',1044),tool('outd',1077),sep(1098),
 tool('bord',1117),arr(1139.5),tool('bsty',1161),arr(1183.5),tool('bcol',1205),arr(1227.5),sep(1238),tool('cond',1257),arr(1279.5)
],67));
define('formula-bar', BAR+`:host{height:34px;width:1486px;padding-top:1px}combo-box{flex:1}s{height:23px}
.in{flex:1;height:24px;border:1px solid #a5a29d;border-top-color:#8c8983;border-radius:4px;background:#fff}
.bt{flex:1;height:24px;border:1px solid #b0ada8;border-radius:4px;background:linear-gradient(#fff,#ecebe9);display:grid;place-items:center}`, () => strip([
 [68,155,`<combo-box>${fit(18,'A1')}</combo-box>`],sep(228),[235,19,svg('fx',19)],[258,22,svg('sum',22)],[282,24,svg('eq')],sep(311),[316,1209,'<div class="in"></div>'],[1529,18,`<div class="bt"><svg width="10" height="6"><path d="M0 0h10L5 6z" fill="#333"/></svg></div>`]
],67));

/* ---------- sheet ---------- */
const COLS = [...'ABCDEFGHIJKLMNOPQRSTUV'], CW = COLS.map(c=>c==='C'?150:c==='D'?16:c==='V'?38:65);
const RH = Array.from({length:38},(_,i)=>({5:18,6:18,12:18,13:19,14:18})[i+1]||17);
const CELLS = {C4:'Section|r',I4:'Total|c',C16:'Roles|l'};
['I','II','III','IV','V','VI','VII','Total'].forEach((t,i)=>CELLS['C'+(6+i)]=t+'|r');
['202220101','012220102','112020202','300011023','310410010','020023210','310203010'].forEach((s,i)=>[...s].forEach((v,j)=>CELLS[COLS[4+j]+(6+i)]=v+'|n'));
[12,6,6,10,10,7,6,5,8].forEach((v,j)=>{CELLS[COLS[4+j]+13]=v+'|n';CELLS['E'+(18+j)]=v+'|r'});
/* zigzag underline of words the spell checker does not know */
const wave = w => `<svg width="${w}" height="3"><path d="M0 2.500${Array.from({length:Math.floor(w/3)},(_,i)=>`L${3*(i+1)} ${i%2?2.5:.5}`).join('')}" fill="none" stroke="#e00000" stroke-width=".9"/></svg>`;
['<u>Implementor</u>'+wave(79),'Coordinator','<u>Shaper</u>'+wave(44),'Plant','Resource Investigator','Monitor Evaluator','Team Worker','Complete Finisher','Specialist'].forEach((t,i)=>CELLS['C'+(18+i)]=t+'|l');
[18,21,22].forEach(r=>CELLS['B'+r]='==&gt;|r red');

define('calc-grid', `:host{width:1479px;height:661px;overflow:hidden;position:relative;background:#fff}
.g{display:grid;grid-template-columns:41px ${CW.map(w=>w+'px').join(' ')};grid-template-rows:20px ${RH.map(h=>h+'px').join(' ')}}
.h{border-right:1px solid #908e88;border-bottom:1px solid #908e88;text-align:center;color:#4c4c4c;display:flex;justify-content:center;align-items:center;line-height:16px;font-size:14.400px}
.h span{transform:scaleX(.95)}
.c{background:linear-gradient(#f8f8f7 50%,#f0efee 50%);padding-left:1px}.r{background:linear-gradient(90deg,#f8f8f7 48%,#f1f0ef 52%);padding-top:1px}
.r span{position:relative;top:.5px}
.c.s{background:linear-gradient(#f6a88b 50%,#ef7a48 50%);color:#fff;font-weight:700;border-color:#e0683a}.r.s{background:linear-gradient(90deg,#f6a88b 48%,#ef7a48 52%);color:#fff;font-weight:700;border-bottom-color:#e0683a}
.V{justify-content:flex-end;border-right:0}
.k,.w{font:700 13px "Liberation Sans",Arial,sans-serif;color:#c0c0c0;display:flex;align-items:flex-end;white-space:nowrap;line-height:15px}
.k{background:#333}.w{border-right:1px solid #c0c0c0;border-bottom:1px solid #c0c0c0}
.k>span{height:15px;margin-bottom:1px;position:relative}
.al{padding-left:1px;z-index:1}.ar{justify-content:flex-end;padding-right:2px}.ac,.an{justify-content:center}.ac{padding-right:1px}.an{font-size:13.333px;font-weight:400;padding-right:1px}.up>span{margin-bottom:2px}.red{color:#f00;font-size:13.333px}
u{text-decoration:none}.al svg{position:absolute;left:0;top:13px}
.cur{position:absolute;left:40px;top:20px;width:66px;height:18px;border:2px solid #000;border-top-width:1px}.cur:after{content:"";position:absolute;right:-4px;bottom:-3px;width:5px;height:5px;background:#000}
.frame{position:absolute;left:334px;top:103px}`, () => {
  let h = `<div class="h r c" style="background:#f6f6f5"></div>` + COLS.map((c,i)=>`<div class="h c ${i?'':'s'} ${c==='V'?'V':''}"><span>${c}</span></div>`).join('');
  RH.forEach((_,r)=>{
    const n = r+1;
    h += `<div class="h r ${r?'':'s'}"><span>${n}</span></div>`;
    COLS.forEach((c,i)=>{
      const v = CELLS[c+n];
      if(i>17){ h += `<div class="w"></div>`; return; }
      if(!v){ h += `<div class="k"></div>`; return; }
      const [t,a] = v.split('|');
      h += `<div class="k a${a} ${a==='n'&&(n===6||n===12||n===13)?'up':''}"><span>${t}</span></div>`;
    });
  });
  const xs = Array.from({length:10},(_,i)=>`M${2+i*65} 0v144`).join('');
  return `<div class="g">${h}</div><div class="cur"></div><svg class="frame" width="589" height="144"><path d="${xs}M0 2h589M0 123h589M0 142h589" stroke="#c0c0c0" stroke-width="4"/></svg>`;
});

define('scroll-v', `:host{width:7px;height:661px;background:#f2f1f0}i{display:block;height:4px;background:#aaa8a4;border-top:1px solid #ccc;padding:1px 1px 0}i:after{content:"";display:block;height:1px;background:#000}b{display:block;height:310px;margin-top:3px;background:#f38e68}`, () => `<i></i><b></b>`);
define('scroll-h', `:host{height:7px;display:flex;justify-content:space-between;background:#f2f1f0;padding:0 8px 0 1px}b{width:703px;background:#f38e68}i{width:5px;background:#aaa8a4;display:grid;place-items:center}i:after{content:"";width:1px;height:5px;background:#000}`, () => `<b></b><i></i>`);

define('sheet-tabs', `:host{height:21px;display:flex;background:#f2f1f0;border-bottom:1px solid #b3b0ab}
.i{flex:none;height:20px;display:flex;align-items:center;justify-content:center}
.t{height:20px;flex:1;border:1px solid #8f8c86;display:flex;justify-content:center;line-height:16px}
.t fit-text{margin-right:1px}
.t.a{background:#fff;border-top:0;border-left:0;font-weight:700;line-height:17px}`, () => {
  const t = [['Index',185,57,31],['Part I',241,56,29],['Part II',296,60,33],['Part III',355,64,36],['Part IV',418,65,38],['Part V',482,61,34],['Part VI',542,65,38],['Part VII',606,69,41],['Results',675,67,43]];
  const tri = (p,l) => `<svg width="9" height="12"><path d="${p}" fill="#b3b1ad"/>${l?`<path d="M${l} .500v11" stroke="#b3b1ad" stroke-width="1.500"/>`:''}</svg>`;
  return strip([[79,9,tri('M9 1v10L3 6z',1.500)],[99,9,tri('M7 0v12L1 6z')],[118,9,tri('M1 0v12l6-6z')],[137,9,tri('M0 1v10l6-5z',8)],
   [163,12,`<svg width="12" height="12"><path d="M6 0v12M0 6h12" stroke="#444" stroke-width="4"/></svg>`],
   ...t.map(([n,x,w,tw],i)=>[x,w,`<div class="t ${i===8?'a':''}">${fit(tw,n)}</div>`])],67);
});

define('status-bar', `:host{height:20px;display:flex;background:#f2f1f0;line-height:19px}
.i{flex:none;height:20px;display:flex;align-items:center}s{width:1px;height:16px;background:#a3a09a}`, () => strip([
 [77,67,fit(67,'Sheet 9 of 9')],[267,1,SEP],[567,1,SEP],[576,101,fit(101,'PageStyle_Results')],[807,1,SEP],[879,72,fit(72,'English (USA)')],[1019,1,SEP],[1087,1,SEP],
 [1097,12,`<svg width="12" height="10"><path d="M0 2h8.500v6H0z" fill="#8a8884"/><path d="M9 .500h3M9 9.500h3M10.500 0v10" stroke="#8a8884"/></svg>`],[1116,1,SEP],
 [1127,12,`<svg width="12" height="12"><path d="M7 .500H.500v10h8V8" fill="none" stroke="#8a8884"/><path d="M9 1.500v6M6.500 3l5 3M11.500 3l-5 3" stroke="#a01020" stroke-width="1.200"/></svg>`],[1145,1,SEP],[1174,1,SEP],
 [1246,94,fit(94,'Average: ; Sum: 0')],[1408,1,SEP],
 [1419,8,`<svg width="8" height="2"><path d="M0 1h8" stroke="#8a8884" stroke-width="2"/></svg>`],
 [1433,97,`<svg width="97" height="10"><path d="M0 5h97" stroke="#b0aeaa" stroke-width="2"/><circle cx="48" cy="5" r="3.500" fill="#fff" stroke="#8a8884"/></svg>`],
 [1536,8,`<svg width="8" height="8"><path d="M0 4h8M4 0v8" stroke="#8a8884" stroke-width="2"/></svg>`],[1551,1,SEP],[1560,31,fit(31,'100%')]
],67));

define('side-panel', `:host{width:47px;height:721px;margin-top:1px;display:flex;border:1px solid #b0aeaa;border-right:0;background:#f2f1f0}
.rail{width:6px;border-right:1px solid #b0aeaa;box-shadow:inset 1px 1px #fff;display:flex;flex-direction:column}
.hd{margin:323px 0 0 -1px;width:7px;height:73px;background:#8d8a84;display:flex;align-items:center;padding-left:1px}
.m{flex:1;display:flex;flex-direction:column;align-items:center;box-shadow:inset 1px 1px #fff;padding-top:7px}
hr{width:22px;border:0;border-top:1px solid #dcdad7;margin:8px 3px 3px 0}
.b{width:32px;height:32px;border:1px solid #b8b5b0;border-radius:4px;display:grid;place-items:center;margin-bottom:8px}`,
 () => `<div class="rail"><div class="hd"><svg width="6" height="8"><path d="M0 0l5 4-5 4z" fill="#f5f5f4"/></svg></div></div>
<div class="m">${svg('smenu')}<hr><div class="b">${svg('wrench',22)}</div><div style="padding-right:2px">${svg('tt',23)}</div><div style="height:9px"></div>${svg('gal',23)}<div style="height:14px"></div>${svg('nav',23)}<div style="height:12px"></div>${svg('fx',22)}</div>`);

define('calc-window', `:host{width:1533px;height:873px;background:#f2f1f0;display:flex;flex-direction:column}
.body{display:grid;grid-template-columns:1486px 47px;height:724px;flex:none}.left{display:flex;flex-direction:column}
.sheet{display:flex;border-top:1px solid #9b9893}`,
 () => `<title-bar></title-bar><menu-bar></menu-bar><standard-bar></standard-bar><format-bar></format-bar>
<div class="body"><div class="left"><formula-bar></formula-bar><div class="sheet"><calc-grid></calc-grid><scroll-v></scroll-v></div><scroll-h></scroll-h><sheet-tabs></sheet-tabs></div><side-panel></side-panel></div><status-bar></status-bar>`);

define('calc-desktop', `:host{width:1600px;height:900px;overflow:hidden}.row{display:flex}`,
 () => `<top-bar></top-bar><div class="row"><app-dock></app-dock><calc-window></calc-window></div>`);
</script>
</body>
</html>
